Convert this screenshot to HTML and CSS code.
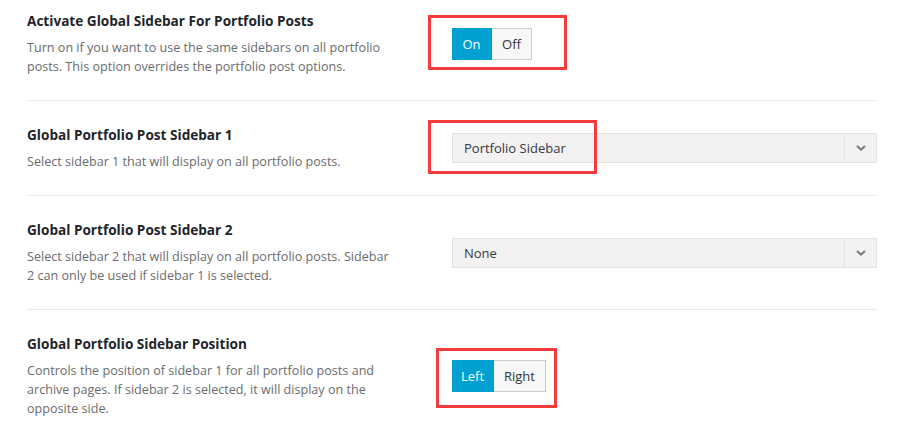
FILE: index.html
```html
<!DOCTYPE html>
<html lang="en">
<head>
<meta charset="utf-8">
<title>Portfolio Sidebar Options</title>
<link rel="stylesheet" href="styles.css">
</head>
<body>
<div class="panel">
  <div class="row">
    <div class="info">
      <h3 class="title">Activate Global Sidebar For Portfolio Posts</h3>
      <p class="desc">Turn on if you want to use the same sidebars on all portfolio posts. This option overrides the portfolio post options.</p>
    </div>
    <div class="control">
      <div class="field">
        <div class="seg">
          <span class="seg-btn active w-on">On</span><span class="seg-btn w-off">Off</span>
        </div>
        <span class="mark mark-1"></span>
      </div>
    </div>
  </div>
  <div class="row">
    <div class="info">
      <h3 class="title">Global Portfolio Post Sidebar 1</h3>
      <p class="desc">Select sidebar 1 that will display on all portfolio posts.</p>
    </div>
    <div class="control">
      <div class="field field-full">
        <div class="select">
          <span class="select-value">Portfolio Sidebar</span>
          <span class="select-arrow"><svg width="10" height="6" viewBox="0 0 10 6"><path d="M1 1 L5 4.6 L9 1" fill="none" stroke="#7a7a7a" stroke-width="2"/></svg></span>
        </div>
        <span class="mark mark-2"></span>
      </div>
    </div>
  </div>
  <div class="row">
    <div class="info">
      <h3 class="title">Global Portfolio Post Sidebar 2</h3>
      <p class="desc">Select sidebar 2 that will display on all portfolio posts. Sidebar 2 can only be used if sidebar 1 is selected.</p>
    </div>
    <div class="control">
      <div class="field field-full">
        <div class="select">
          <span class="select-value">None</span>
          <span class="select-arrow"><svg width="10" height="6" viewBox="0 0 10 6"><path d="M1 1 L5 4.6 L9 1" fill="none" stroke="#7a7a7a" stroke-width="2"/></svg></span>
        </div>
      </div>
    </div>
  </div>
  <div class="row">
    <div class="info">
      <h3 class="title">Global Portfolio Sidebar Position</h3>
      <p class="desc">Controls the position of sidebar 1 for all portfolio posts and archive pages. If sidebar 2 is selected, it will display on the opposite side.</p>
    </div>
    <div class="control">
      <div class="field">
        <div class="seg">
          <span class="seg-btn active w-left">Left</span><span class="seg-btn w-right">Right</span>
        </div>
        <span class="mark mark-3"></span>
      </div>
    </div>
  </div>
</div>
</body>
</html>
```

FILE: styles.css
```css
html, body {
  margin: 0;
  padding: 0;
  background: #ffffff;
}

body {
  font-family: "Open Sans", "Noto Sans", "DejaVu Sans", sans-serif;
  color: #333333;
}

.panel {
  margin-left: 27px;
  width: 850px;
}

.row {
  display: grid;
  grid-template-columns: 425px 1fr;
  align-items: center;
  border-top: 1px solid #e6e6e6;
  padding: 24px 0 24px;
}

.row:first-child {
  border-top: none;
  padding-top: 11px;
}

.info {
  width: 372px;
}

.title {
  margin: 0;
  font-size: 13.6px;
  line-height: 20px;
  font-weight: 700;
  color: #222529;
}

.desc {
  margin: 7px 0 0;
  font-size: 12.6px;
  line-height: 19px;
  color: #6b6b6e;
}

.control {
  display: flex;
}

.field {
  position: relative;
  display: inline-flex;
}

.field-full {
  display: flex;
  flex: 1;
}

.seg {
  display: inline-flex;
  height: 32px;
}

.seg-btn {
  box-sizing: border-box;
  height: 32px;
  display: flex;
  align-items: center;
  justify-content: center;
  font-size: 13px;
  color: #333333;
  background: #f7f7f7;
  border: 1px solid #cccccc;
  border-left: none;
}

.seg-btn.active {
  background: #00a0d2;
  border-color: #00a0d2;
  color: #ffffff;
}

.w-on { width: 40px; }
.w-off { width: 40px; }
.w-left { width: 42px; }
.w-right { width: 52px; }

.select {
  box-sizing: border-box;
  flex: 1;
  height: 30px;
  display: flex;
  align-items: stretch;
  background: #f3f1f2;
  border: 1px solid #e3e3e3;
}

.select-value {
  flex: 1;
  display: flex;
  align-items: center;
  padding-left: 11px;
  font-size: 13px;
  color: #333a44;
}

.select-arrow {
  width: 31px;
  border-left: 1px solid #e3e3e3;
  display: flex;
  align-items: center;
  justify-content: center;
}

.mark {
  position: absolute;
  box-sizing: border-box;
  border: 3px solid #f53b3b;
  pointer-events: none;
}

.mark-1 {
  left: -24px;
  top: -13px;
  width: 139px;
  height: 55px;
}

.mark-2 {
  left: -24px;
  top: -13px;
  width: 169px;
  height: 54px;
}

.mark-3 {
  left: -16px;
  top: -12px;
  width: 121px;
  height: 60px;
}
```
